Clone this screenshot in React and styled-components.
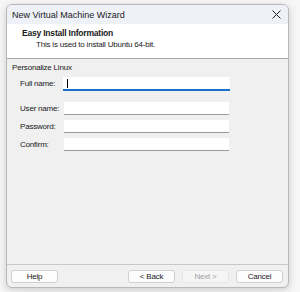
import styled, { createGlobalStyle } from "styled-components";

const GlobalStyle = createGlobalStyle`
  html, body {
    margin: 0;
    padding: 0;
    background: #f7f7f7;
    font-family: "Segoe UI", "Liberation Sans", Arial, sans-serif;
    font-size: 9px;
    color: #1a1a1a;
  }
`;

export default function App() {
  return (
    <>
      <GlobalStyle />
      <Page>
        <Window>
          <TitleBar>
            <span>New Virtual Machine Wizard</span>
            <svg width="9" height="9" viewBox="0 0 9 9">
              <path d="M0.5 0.5 L8.5 8.5 M8.5 0.5 L0.5 8.5" stroke="#202020" strokeWidth="1" />
            </svg>
          </TitleBar>
          <Header>
            <h1>Easy Install Information</h1>
            <p>This is used to install Ubuntu 64-bit.</p>
          </Header>
          <Body>
            <GroupTitle>Personalize Linux</GroupTitle>
            <Fields>
              <Label>Full name:</Label>
              <Input $focused>
                <Caret />
              </Input>
              <Spacer />
              <Label>User name:</Label>
              <Input />
              <Label>Password:</Label>
              <Input />
              <Label>Confirm:</Label>
              <Input />
            </Fields>
          </Body>
          <Footer>
            <Button>Help</Button>
            <Grow />
            <Button>&lt; Back</Button>
            <Button $disabled>Next &gt;</Button>
            <Button>Cancel</Button>
          </Footer>
        </Window>
      </Page>
    </>
  );
}

const Page = styled.div`
  width: 300px;
  height: 292px;
  padding: 4px 0 0 6px;
  box-sizing: border-box;
`;

const Window = styled.div`
  width: 283px;
  height: 284px;
  box-sizing: border-box;
  border: 1px solid #b8b8b8;
  border-radius: 6px;
  overflow: hidden;
  display: flex;
  flex-direction: column;
  background: #f0f0f0;
  box-shadow: 0 2px 8px rgba(0, 0, 0, 0.18);
`;

const TitleBar = styled.div`
  height: 19px;
  background: #eef1f8;
  display: flex;
  align-items: center;
  justify-content: space-between;
  padding: 0 7px 0 5px;
  span {
    font-size: 9px;
    color: #1a1a1a;
  }
`;

const Header = styled.div`
  height: 35px;
  background: #ffffff;
  border-bottom: 1px solid #a8a8a8;
  padding: 3px 0 0 15px;
  box-sizing: border-box;
  h1 {
    margin: 0;
    font-size: 8.5px;
    font-weight: bold;
    letter-spacing: -0.2px;
    line-height: 12px;
  }
  p {
    margin: 0;
    padding-left: 14px;
    font-size: 8px;
    letter-spacing: -0.2px;
    line-height: 12px;
  }
`;

const Body = styled.div`
  flex: 1;
  padding: 3px 0 0 5px;
  font-size: 8px;
  letter-spacing: -0.2px;
`;

const GroupTitle = styled.div`
  line-height: 12px;
  white-space: nowrap;
`;

const Fields = styled.div`
  display: grid;
  grid-template-columns: 43px 166px;
  row-gap: 5px;
  padding: 3px 0 0 8px;
  align-items: center;
`;

const Label = styled.div`
  line-height: 12px;
  white-space: nowrap;
`;

const Input = styled.div`
  position: relative;
  height: 12px;
  background: #ffffff;
  border-bottom: ${(p) => (p.$focused ? "2px solid #1a6fc9" : "1px solid #9a9a9a")};
  margin-left: ${(p) => (p.$focused ? "0" : "1px")};
  width: ${(p) => (p.$focused ? "167px" : "165px")};
`;

const Caret = styled.div`
  position: absolute;
  left: 4px;
  top: 2px;
  width: 1px;
  height: 9px;
  background: #000;
`;

const Spacer = styled.div`
  grid-column: 1 / -1;
  height: 1px;
`;

const Footer = styled.div`
  height: 22px;
  border-top: 1px solid #c8c8c8;
  display: flex;
  align-items: center;
  gap: 7px;
  padding: 0 5px 0 4px;
`;

const Grow = styled.div`
  flex: 1;
`;

const Button = styled.div`
  width: 47px;
  height: 13px;
  box-sizing: border-box;
  border: 1px solid ${(p) => (p.$disabled ? "#e6e6e6" : "#cfcfcf")};
  border-radius: 3px;
  background: ${(p) => (p.$disabled ? "#f5f5f5" : "#fdfdfd")};
  color: ${(p) => (p.$disabled ? "#a2a2a2" : "#1a1a1a")};
  font-size: 8px;
  letter-spacing: -0.2px;
  line-height: 11px;
  text-align: center;
`;
